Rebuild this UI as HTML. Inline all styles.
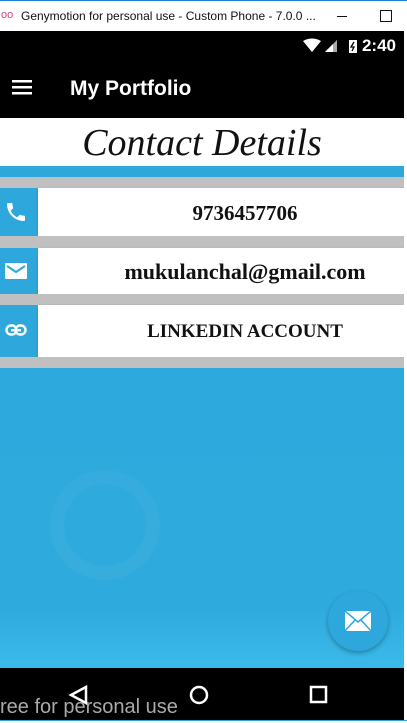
<!DOCTYPE html><html><head><style>
body{margin:0;width:407px;height:723px;overflow:hidden;background:#fff;position:relative;font-family:"Liberation Sans",sans-serif}
div{position:absolute;box-sizing:border-box}
.g{left:0;width:404px;background:#c0c0c0}
.r{left:38px;width:366px;background:#fff;font-family:"Liberation Serif",serif;font-weight:bold;color:#111;text-align:center;padding-left:48px;box-shadow:0 1px 2px #777;white-space:nowrap}
.ic{left:0;width:38px;background:#2ea8dc}
</style></head><body>
<div style="left:0;top:0;width:407px;height:31px;background:#fff;border-top:1px solid #1e7fd8;font-size:12px;color:#111">
<span style="position:absolute;left:1px;top:8px;color:#d04080;font-size:11px">oo</span>
<span style="position:absolute;left:21px;top:8px">Genymotion for personal use - Custom Phone - 7.0.0 ...</span>
<span style="position:absolute;left:337px;top:15px;width:10px;height:1px;background:#111"></span>
<span style="position:absolute;left:380px;top:9px;width:10px;height:10px;border:1px solid #111"></span></div>
<div style="left:0;top:31px;width:404px;height:87px;background:#000;color:#fff">
<span style="position:absolute;right:8px;top:5px;font-size:17px;font-weight:bold">2:40</span>
<svg style="position:absolute;left:303px;top:7px" width="62" height="16"><path d="M0 3 Q9 -2 18 3 L9 14Z" fill="#fff"/><path d="M22 14 L34 2 V14Z" fill="#aaa"/><path d="M22 14 L30 6 V14Z" fill="#fff"/><rect x="46" y="2" width="8" height="13" fill="#fff"/><path d="M51 4 L48 9 H51 L49 13" stroke="#000" fill="none" stroke-width="1.3"/></svg>
<svg style="position:absolute;left:12px;top:48px" width="20" height="16"><rect y="1" width="20" height="2.5" fill="#fff"/><rect y="7" width="20" height="2.5" fill="#fff"/><rect y="13" width="20" height="2.5" fill="#fff"/></svg>
<span style="position:absolute;left:70px;top:46px;font-size:21px;font-weight:bold">My Portfolio</span></div>
<div style="left:0;top:118px;width:404px;height:48px;background:#fff;text-align:center;font-family:'Liberation Serif',serif;font-style:italic;font-size:38px;line-height:50px;color:#111">Contact Details</div>
<div style="left:0;top:166px;width:404px;height:202px;background:#2ea8dc"></div>
<div class="g" style="top:177px;height:11px"></div>
<div class="ic" style="top:188px;height:48px"><svg style="margin:12px 0 0 4px" width="24" height="24" viewBox="0 0 24 24"><path fill="#fff" d="M6.6 10.8c1.4 2.8 3.8 5.1 6.6 6.6l2.2-2.2c.3-.3.7-.4 1-.2 1.1.4 2.3.6 3.6.6.6 0 1 .4 1 1V20c0 .6-.4 1-1 1C10.6 21 3 13.4 3 4c0-.6.4-1 1-1h3.5c.6 0 1 .4 1 1 0 1.3.2 2.5.6 3.6.1.3 0 .7-.2 1z"/></svg></div>
<div class="r" style="top:188px;height:48px;line-height:50px;font-size:21px">9736457706</div>
<div class="g" style="top:236px;height:12px"></div>
<div class="ic" style="top:248px;height:46px"><svg style="margin:14px 0 0 5px" width="22" height="18" viewBox="0 0 22 18"><rect x="0" y="1" width="22" height="16" rx="1" fill="#fff"/><path d="M2 4 L11 10 L20 4" stroke="#2ea8dc" stroke-width="2" fill="none"/></svg></div>
<div class="r" style="top:248px;height:46px;line-height:48px;font-size:22px">mukulanchal@gmail.com</div>
<div class="g" style="top:294px;height:11px"></div>
<div class="ic" style="top:305px;height:52px"><svg style="margin:19px 0 0 5px" width="22" height="14" viewBox="0 0 22 14"><rect x="1.5" y="1.5" width="10" height="9" rx="4.5" stroke="#fff" stroke-width="2.4" fill="none"/><rect x="10.5" y="1.5" width="10" height="9" rx="4.5" stroke="#fff" stroke-width="2.4" fill="none"/><rect x="6" y="5" width="10" height="2.4" fill="#fff"/></svg></div>
<div class="r" style="top:305px;height:52px;line-height:54px;font-size:19px">LINKEDIN ACCOUNT</div>
<div class="g" style="top:357px;height:11px"></div>
<div style="left:0;top:368px;width:404px;height:300px;background:linear-gradient(180deg,#2ea9dd,#2faadd 80%,#3bbaea)"></div>
<div style="left:50px;top:470px;width:110px;height:110px;border-radius:50%;border:14px solid rgba(255,255,255,0.04)"></div>
<div style="left:328px;top:591px;width:60px;height:60px;border-radius:50%;background:#2ea8dc;box-shadow:0 2px 5px rgba(0,0,0,.3)"><svg style="margin:20px 0 0 17px" width="26" height="20" viewBox="0 0 26 20"><rect width="26" height="20" fill="#fff"/><path d="M0 0 L13 11 L26 0 M0 20 L10 9 M26 20 L16 9" stroke="#2ea8dc" stroke-width="1.5" fill="none"/></svg></div>
<div style="left:0;top:668px;width:404px;height:52px;background:#000"></div>
<div style="left:404px;top:31px;width:3px;height:692px;background:#fff"></div>
<svg style="position:absolute;left:68px;top:684px" width="260" height="22"><path d="M18 3 L3 11 L18 19Z" stroke="#fff" stroke-width="2.5" fill="none"/><circle cx="131" cy="11" r="8" stroke="#fff" stroke-width="2.5" fill="none"/><rect x="243" y="3" width="15" height="15" stroke="#fff" stroke-width="2.5" fill="none"/></svg>
<div style="left:0;top:696px;font-size:20px;color:#aaa">ree for personal use</div>
<div style="left:0;top:720px;width:407px;height:3px;background:#fff;border-top:1px solid #2ea8dc"></div>
</body></html>
